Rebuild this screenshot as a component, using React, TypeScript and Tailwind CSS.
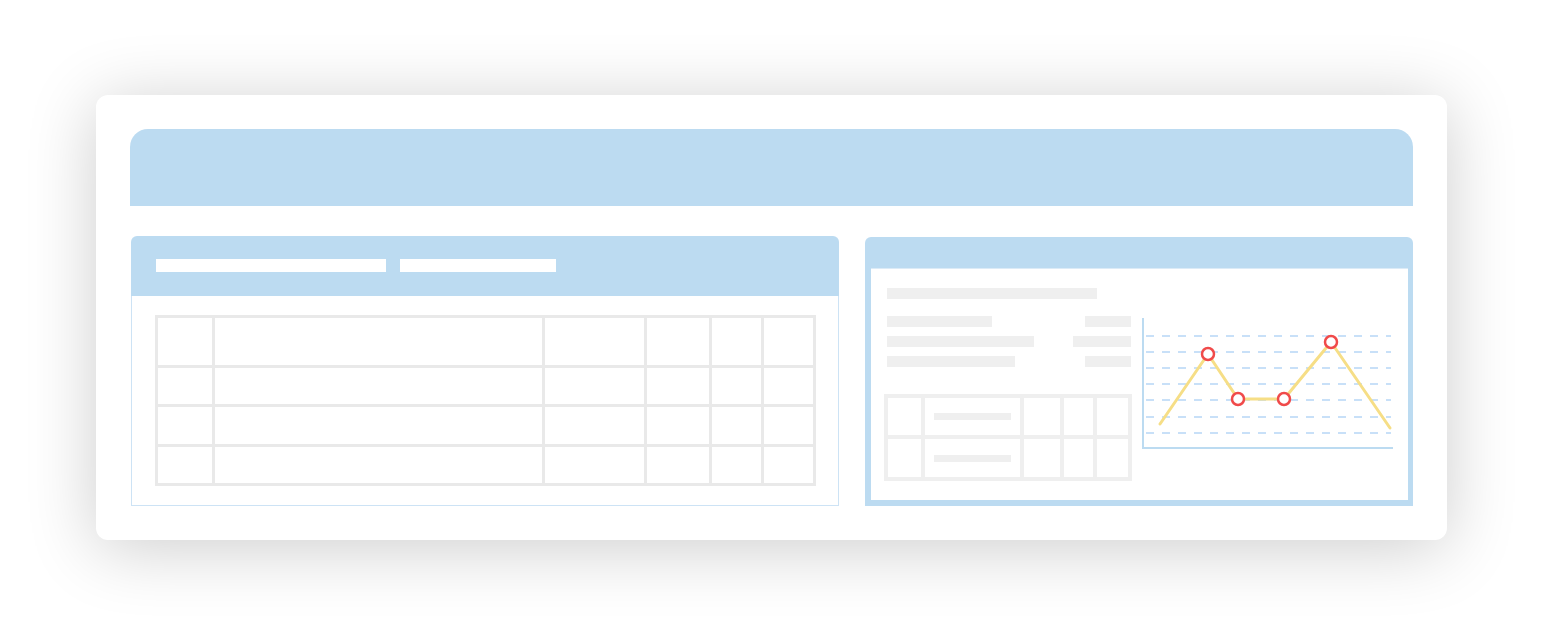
const BLUE = 'bg-[#bcdbf1]'

const LEFT_ROWS = [0, 1, 2, 3]
const LEFT_COLS = [0, 1, 2, 3, 4, 5]
const RIGHT_COLS = [0, 1, 2, 3, 4]

const INFO_ROWS = [
  { left: 'w-[105px]', right: 'w-[46px]' },
  { left: 'w-[147px]', right: 'w-[58px]' },
  { left: 'w-[128px]', right: 'w-[46px]' }
]

const GRID_Y = [18, 34, 50, 66, 82, 99, 115]
const POINTS: [number, number][] = [
  [18, 106],
  [66, 36],
  [96, 81],
  [142, 81],
  [189, 24],
  [248, 110]
]

function LineChart() {
  return (
    <svg width="252" height="132" viewBox="0 0 252 132" className="block">
      {GRID_Y.map((y) => (
        <line key={y} x1="4" x2="249" y1={y} y2={y} stroke="#b7d6f6" strokeWidth="1.5" strokeDasharray="8 8" />
      ))}
      <line x1="1" x2="1" y1="0" y2="131" stroke="#bcdbf1" strokeWidth="2" />
      <line x1="0" x2="251" y1="130" y2="130" stroke="#bcdbf1" strokeWidth="2" />
      <polyline
        points={POINTS.map((p) => p.join(',')).join(' ')}
        fill="none"
        stroke="#f6de86"
        strokeWidth="3"
        strokeLinecap="round"
        strokeLinejoin="round"
      />
      {POINTS.slice(1, 5).map(([x, y]) => (
        <circle key={x} cx={x} cy={y} r="6" fill="white" stroke="#f04a4a" strokeWidth="2.5" />
      ))}
    </svg>
  )
}

export default function App() {
  return (
    <div className="w-[1544px] h-[636px] bg-white pl-[96px] pt-[95px]">
      <div className="w-[1351px] bg-white rounded-[12px] p-[34px] shadow-[0_8px_70px_rgba(0,0,0,0.2)]">
        {/* banner */}
        <div className={`h-[77px] ${BLUE} rounded-t-[18px]`} />

        <div className="mt-[30px] flex gap-[26px]">
          {/* left panel */}
          <div className="ml-[1px] w-[708px] h-[270px] flex flex-col">
            <div className={`h-[60px] ${BLUE} rounded-t-[6px] flex gap-[14px] pl-[25px] pt-[23px]`}>
              <div className="w-[230px] h-[13px] bg-white" />
              <div className="w-[156px] h-[13px] bg-white" />
            </div>
            <div className="flex-1 border border-t-0 border-[#cde3f5] pl-[23px] pt-[19px]">
              <div className="w-[661px] grid grid-cols-[54px_327px_99px_62px_49px_49px] grid-rows-[47px_36px_37px_36px] gap-[3px] p-[3px] bg-[#e9e9e9]">
                {LEFT_ROWS.map((r) =>
                  LEFT_COLS.map((c) => <div key={`${r}-${c}`} className="bg-white" />)
                )}
              </div>
            </div>
          </div>

          {/* right panel */}
          <div className="w-[548px] h-[269px] mt-[1px] flex flex-col">
            <div className={`h-[31px] ${BLUE} rounded-t-[6px]`} />
            <div className="flex-1 border-l-[6px] border-r-[5px] border-b-[6px] border-[#bcdbf1] flex">
              <div className="w-[271px] pl-[16px] pt-[19px] border-t border-[#dcebf7]">
                <div className="w-[210px] h-[11px] bg-[#efefef]" />
                <div className="mt-[17px] w-[244px] flex flex-col gap-[9px]">
                  {INFO_ROWS.map((row, i) => (
                    <div key={i} className="flex justify-between">
                      <div className={`${row.left} h-[11px] bg-[#efefef]`} />
                      <div className={`${row.right} h-[11px] bg-[#efefef]`} />
                    </div>
                  ))}
                </div>
                <div className="mt-[27px] ml-[-3px] w-[248px] grid grid-cols-[33px_95px_36px_29px_31px] grid-rows-[37px_38px] gap-[4px] p-[4px] bg-[#efefef]">
                  {[0, 1].map((r) =>
                    RIGHT_COLS.map((c) => (
                      <div key={`${r}-${c}`} className="bg-white flex items-center">
                        {c === 1 && <div className="ml-[9px] w-[77px] h-[7px] bg-[#efefef]" />}
                      </div>
                    ))
                  )}
                </div>
              </div>
              <div className="flex-1 border-t border-[#dcebf7] pt-[49px]">
                <LineChart />
              </div>
            </div>
          </div>
        </div>
      </div>
    </div>
  )
}
